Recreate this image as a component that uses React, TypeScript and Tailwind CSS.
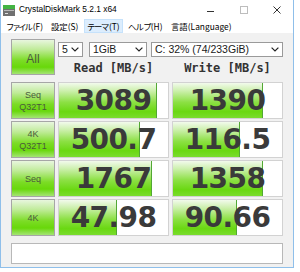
import React from "react";

type Row = { l1: string; l2?: string; r: string; w: string };

const rows: Row[] = [
  { l1: "Seq", l2: "Q32T1", r: "3089", w: "1390" },
  { l1: "4K", l2: "Q32T1", r: "500.7", w: "116.5" },
  { l1: "Seq", r: "1767", w: "1358" },
  { l1: "4K", r: "47.98", w: "90.66" },
];

function frac(v: string) {
  const n = parseFloat(v);
  return Math.max(0, Math.min(1, Math.log10(n * 10) / 5));
}

function Chevron() {
  return (
    <svg width="8" height="5" viewBox="0 0 8 5" className="shrink-0">
      <polyline points="0.6,0.6 4,4 7.4,0.6" fill="none" stroke="#222" strokeWidth="1.2" />
    </svg>
  );
}

function Select({ w, text }: { w: string; text: string }) {
  return (
    <div
      className={`${w} flex h-[15px] items-center justify-between border border-[#9a9a9a] bg-white pl-[3px] pr-[3px] font-['Liberation_Sans',sans-serif] text-[10.5px] leading-none text-[#1a1a1a]`}
    >
      <span className="whitespace-nowrap">{text}</span>
      <Chevron />
    </div>
  );
}

function Cell({ v }: { v: string }) {
  const pct = frac(v) * 100;
  return (
    <div className="relative h-[37px] w-[111px] border border-[#d2d2d2] bg-white">
      <div
        className="absolute inset-y-0 left-0 border-r border-[#52a834] bg-[linear-gradient(to_bottom,#f2faec_0%,#cdf0ae_22%,#8ce044_55%,#6ad812_82%,#7adc2e_100%)]"
        style={{ width: `${pct}%` }}
      />
      <div className="relative flex h-full items-center justify-center font-['DejaVu_Sans',sans-serif] text-[28px] font-bold leading-none tracking-[-0.6px] text-[#3a3a3a]">
        {v}
      </div>
    </div>
  );
}

const btn =
  "flex flex-col items-center justify-center border border-[#a6a6a6] bg-[linear-gradient(to_bottom,#e8f6de_0%,#bfeb98_28%,#7cdc26_60%,#68d80a_80%,#a4e474_100%)] font-['Liberation_Sans',sans-serif] text-[#4a5a3c]";

export default function App() {
  return (
    <div className="h-[272px] w-[300px] bg-white">
      <div className="flex h-[268px] w-[294px] flex-col border-x border-b border-[#8fbfea] bg-white">
        {/* Title bar */}
        <div className="flex h-[19px] items-center">
          <svg width="12" height="11" viewBox="0 0 12 11" className="ml-[2px] mt-[1px]">
            <rect x="0" y="0" width="12" height="4" fill="#44b444" />
            <rect x="0" y="4" width="12" height="7" fill="#707070" />
            <rect x="1" y="5" width="10" height="1" fill="#b8b8b8" />
            <rect x="2" y="8" width="3" height="1" fill="#e0e0e0" />
          </svg>
          <span className="ml-[4px] whitespace-nowrap font-['Liberation_Sans',sans-serif] text-[8.4px] leading-none text-black">
            CrystalDiskMark 5.2.1 x64
          </span>
          <div className="ml-auto flex h-full">
            <div className="flex h-full w-[33px] items-center justify-center">
              <div className="mt-[3px] h-px w-[7px] bg-[#333]" />
            </div>
            <div className="flex h-full w-[33px] items-center justify-center">
              <div className="h-[8px] w-[8px] border border-[#bdbdbd]" />
            </div>
            <div className="flex h-full w-[33px] items-center justify-center">
              <svg width="8" height="8" viewBox="0 0 8 8">
                <line x1="0.5" y1="0.5" x2="7.5" y2="7.5" stroke="#333" strokeWidth="1" />
                <line x1="7.5" y1="0.5" x2="0.5" y2="7.5" stroke="#333" strokeWidth="1" />
              </svg>
            </div>
          </div>
        </div>

        {/* Menu bar */}
        <div className="flex h-[14px] items-stretch font-['Noto_Sans_CJK_JP',sans-serif] text-[8.4px] leading-none text-black">
          <div className="flex w-[47px] items-center pl-[5px] whitespace-nowrap">
            <span className="tracking-[-2.2px]">ファイル</span>
            <span className="ml-[2px]">(F)</span>
          </div>
          <div className="flex w-[36px] items-center pl-[3px] whitespace-nowrap">設定(S)</div>
          <div className="flex w-[39px] items-center border border-[#c6e2fb] bg-[#dcedfd] pl-[2px] whitespace-nowrap">
            <span className="tracking-[-1.4px]">テーマ</span>
            <span className="ml-[1px]">(T)</span>
          </div>
          <div className="flex w-[44px] items-center pl-[5px] whitespace-nowrap">
            <span className="tracking-[-0.8px]">ヘルプ</span>
            <span>(H)</span>
          </div>
          <div className="flex items-center pl-[4px] whitespace-nowrap">言語(Language)</div>
        </div>

        {/* Content */}
        <div className="flex flex-1 flex-col bg-[#f1f1f1] pl-[10px] pt-[6px]">
          <div className="flex gap-[3px]">
            <div className={`${btn} h-[36px] w-[44px] text-[12px]`}>
              <span className="mt-[4px]">All</span>
            </div>
            <div className="flex w-[225px] flex-col">
              <div className="mt-[3px] flex">
                <Select w="w-[25px]" text="5" />
                <div className="ml-[6px]">
                  <Select w="w-[58px]" text="1GiB" />
                </div>
                <div className="ml-[4px]">
                  <Select w="w-[132px]" text="C: 32% (74/233GiB)" />
                </div>
              </div>
              <div className="flex h-[21px] gap-[3px] font-['DejaVu_Sans_Mono',monospace] text-[12px] font-bold leading-none text-[#333]">
                <div className="flex w-[111px] items-center justify-center pt-[1px]">Read [MB/s]</div>
                <div className="flex w-[111px] items-center justify-center pt-[1px]">Write [MB/s]</div>
              </div>
            </div>
          </div>

          <div className="mt-[4px] flex flex-col gap-[2px]">
            {rows.map((r, i) => (
              <div key={i} className="flex gap-[3px]">
                <div className={`${btn} h-[37px] w-[44px] text-[9px] leading-[12px]`}>
                  <span>{r.l1}</span>
                  {r.l2 && <span>{r.l2}</span>}
                </div>
                <Cell v={r.r} />
                <Cell v={r.w} />
              </div>
            ))}
          </div>

          <div className="mt-[7px] h-[21px] w-[272px] border border-[#b8b8b8] bg-white" />
        </div>
      </div>
    </div>
  );
}
